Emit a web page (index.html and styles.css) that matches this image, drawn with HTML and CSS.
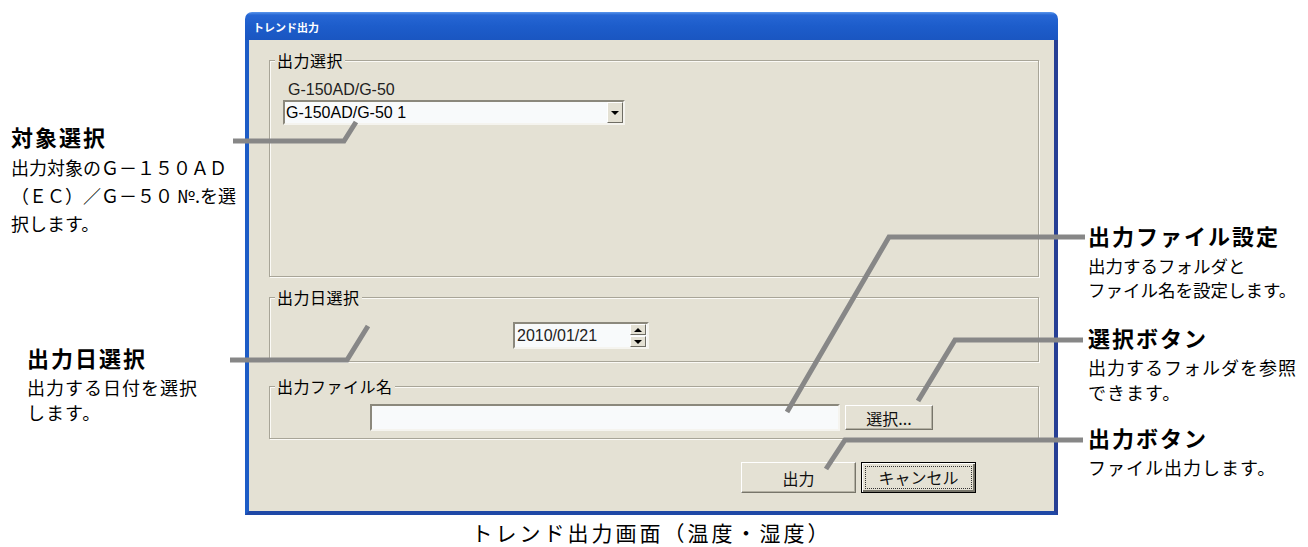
FILE: index.html
```html
<!DOCTYPE html>
<html>
<head lang="ja">
<meta charset="UTF-8">
<title>トレンド出力画面</title>
<link rel="stylesheet" href="styles.css">
</head>
<body>
<div class="page">
    <div class="stage">

        <div class="notes notes-left">
            <div class="note note-target">
                <h2>対象選択</h2>
                <p>出力対象のＧ－１５０ＡＤ<br>（ＥＣ）／Ｇ－５０ №.を選<br>択します。</p>
            </div>
            <div class="note note-date">
                <h2>出力日選択</h2>
                <p>出力する日付を選択<br>します。</p>
            </div>
        </div>

        <div class="center">
            <div class="window">
                <div class="titlebar">トレンド出力</div>
                <div class="client">

                    <div class="group group-target">
                        <div class="group-title">出力選択</div>
                        <div class="field-label">G-150AD/G-50</div>
                        <div class="combo">
                            <span class="combo-text">G-150AD/G-50 1</span>
                            <span class="drop-btn"><i class="tri-down"></i></span>
                        </div>
                    </div>

                    <div class="group group-date">
                        <div class="group-title">出力日選択</div>
                        <div class="spinner">
                            <span class="spinner-text">2010/01/21</span>
                            <span class="spin-btns">
                                <span class="spin-btn"><i class="tri-up"></i></span>
                                <span class="spin-btn"><i class="tri-down"></i></span>
                            </span>
                        </div>
                    </div>

                    <div class="group group-file">
                        <div class="group-title">出力ファイル名</div>
                        <div class="file-row">
                            <div class="file-input"></div>
                            <button class="btn btn-browse">選択...</button>
                        </div>
                    </div>

                    <div class="actions">
                        <button class="btn btn-big">出力</button>
                        <button class="btn btn-big btn-default"><span>キャンセル</span></button>
                    </div>

                </div>
            </div>
            <p class="caption">トレンド出力画面（温度・湿度）</p>
        </div>

        <div class="notes notes-right">
            <div class="note note-file">
                <h2>出力ファイル設定</h2>
                <p>出力するフォルダと<br>ファイル名を設定します。</p>
            </div>
            <div class="note note-browse">
                <h2>選択ボタン</h2>
                <p>出力するフォルダを参照<br>できます。</p>
            </div>
            <div class="note note-output">
                <h2>出力ボタン</h2>
                <p>ファイル出力します。</p>
            </div>
        </div>

    </div>

    <!-- leader lines from notes to the controls -->
    <svg class="leaders" width="1308" height="547" viewBox="0 0 1308 547">
        <g fill="none" stroke="#878787" stroke-width="5" stroke-linejoin="miter">
            <polyline points="233,141 344,141 356,122"/>
            <polyline points="230,360 347,360 368,326"/>
            <polyline points="1085,237 889,237 787,412"/>
            <polyline points="1083,340 955,340 918,401"/>
            <polyline points="1083,440 845,440 826,469"/>
        </g>
    </svg>
</div>
</body>
</html>
```

FILE: styles.css
```css
body {
    margin: 0;
    background: #fff;
    font-family: "Noto Sans CJK JP", sans-serif;
    color: #000;
}
.page {
    position: relative;
    width: 1308px;
    height: 547px;
    overflow: hidden;
}
.stage {
    display: flex;
    align-items: flex-start;
}

/* notes beside the dialog */
.notes {
    flex: none;
}
.notes-left {
    width: 245px;
}
.notes-right {
    width: 250px;
    padding-left: 30px;
    box-sizing: border-box;
}
.note h2 {
    margin: 0;
    font-size: 22px;
    line-height: 30px;
    font-weight: bold;
    letter-spacing: 2px;
    white-space: nowrap;
}
.note p {
    margin: 3px 0 0 0;
    font-size: 18px;
    line-height: 25px;
    letter-spacing: 1px;
    white-space: nowrap;
}
.note-target {
    margin: 121px 0 0 11px;
}
.note-target p {
    margin-top: 2px;
    line-height: 28px;
    letter-spacing: 0;
}
.note-date {
    margin: 105px 0 0 27px;
}
.note-file {
    margin-top: 220px;
}
.note-file p {
    margin-top: 4px;
    line-height: 24px;
    font-size: 17.5px;
    letter-spacing: 0;
}
.note-browse {
    margin-top: 20px;
}
.note-output {
    margin-top: 17px;
}

/* dialog window */
.center {
    flex: none;
    width: 813px;
    margin-top: 12px;
}
.window {
    width: 813px;
}
.titlebar {
    height: 28px;
    box-sizing: border-box;
    padding: 4px 0 0 8px;
    line-height: 22px;
    font-size: 11px;
    font-weight: bold;
    color: #fff;
    border-radius: 7px 7px 0 0;
    background: linear-gradient(to bottom, #5b97ec 0, #2666d4 3px, #1d5dcb 50%, #1a56c1 100%);
}
.client {
    height: 475px;
    box-sizing: border-box;
    padding: 20px 15px 0 20px;
    background: #e4e1d4;
    border: 4px solid #1d5cc6;
    border-top: none;
    border-right-color: #263f95;
    border-bottom-color: #1f48a6;
    font-family: "Liberation Sans", "Noto Sans CJK JP", sans-serif;
    font-size: 16px;
}
.group {
    border: 1px solid #a8a598;
    box-shadow: 1px 1px 0 #fbfaf6, inset 1px 1px 0 #fbfaf6;
    box-sizing: border-box;
    margin-bottom: 20px;
}
.group-title {
    width: fit-content;
    margin: -10px 0 0 5px;
    padding: 0 2px;
    background: #e4e1d4;
    font-family: "Noto Sans CJK JP", sans-serif;
    font-size: 16px;
    line-height: 18px;
    letter-spacing: 0.5px;
}
.group-target {
    height: 217px;
}
.group-date {
    height: 65px;
    margin-bottom: 24px;
}
.group-file {
    height: 53px;
    margin-bottom: 23px;
}

.field-label {
    margin: 12px 0 0 18px;
    line-height: 18px;
    color: #222;
}
.combo {
    display: flex;
    align-items: center;
    justify-content: space-between;
    width: 342px;
    height: 25px;
    margin: 1px 0 0 13px;
    box-sizing: border-box;
    border: 2px solid;
    border-color: #8b887c #f5f4ef #f5f4ef #8b887c;
    background: #f8fafb;
}
.combo-text {
    padding-left: 1px;
    line-height: 21px;
}
.drop-btn,
.spin-btn {
    display: flex;
    align-items: center;
    justify-content: center;
    box-sizing: border-box;
    background: #e4e1d4;
    border: 1px solid;
    border-color: #fff #6f6d64 #6f6d64 #fff;
}
.drop-btn {
    width: 16px;
    height: 21px;
}
.tri-down,
.tri-up {
    display: block;
    width: 0;
    height: 0;
    border-left: 4px solid transparent;
    border-right: 4px solid transparent;
}
.tri-down {
    border-top: 4px solid #000;
}
.tri-up {
    border-bottom: 4px solid #000;
}

.spinner {
    display: flex;
    align-items: center;
    justify-content: space-between;
    width: 136px;
    height: 27px;
    margin: 16px 0 0 243px;
    box-sizing: border-box;
    border: 2px solid;
    border-color: #8b887c #f5f4ef #f5f4ef #8b887c;
    background: #f8fafb;
}
.spinner-text {
    padding-left: 2px;
    color: #222;
}
.spin-btns {
    display: flex;
    flex-direction: column;
    gap: 1px;
    padding-right: 1px;
}
.spin-btn {
    width: 16px;
    height: 11px;
}

.file-row {
    display: flex;
    align-items: flex-start;
    gap: 5px;
    margin: 9px 0 0 100px;
}
.file-input {
    width: 470px;
    height: 27px;
    box-sizing: border-box;
    border: 2px solid;
    border-color: #8b887c #f5f4ef #f5f4ef #8b887c;
    background: #f8fafb;
}

.btn {
    font-family: "Noto Sans CJK JP", sans-serif;
    font-size: 16px;
    color: #111;
    background: #e4e1d4;
    border: 1px solid;
    border-color: #fff #77756a #77756a #fff;
    box-shadow: inset -1px -1px 0 #b4b1a4;
    padding: 0;
    cursor: pointer;
}
.btn-browse {
    width: 88px;
    height: 25px;
    margin-top: 1px;
    line-height: 22px;
}
.actions {
    display: flex;
    justify-content: flex-end;
    gap: 5px;
    padding-right: 63px;
}
.btn-big {
    width: 115px;
    height: 31px;
    line-height: 28px;
}
.btn-default {
    border: 1px solid #000;
    box-shadow: inset 1px 1px 0 #fff, inset -2px -2px 0 #77756a;
    padding: 3px;
}
.btn-default span {
    display: block;
    height: 100%;
    box-sizing: border-box;
    border: 1px dotted #333;
    line-height: 21px;
}

.caption {
    margin: 2px 0 0 0;
    text-align: center;
    font-size: 21px;
    line-height: 30px;
    letter-spacing: 3px;
    white-space: nowrap;
}

.leaders {
    position: absolute;
    top: 0;
    left: 0;
    pointer-events: none;
}
```
